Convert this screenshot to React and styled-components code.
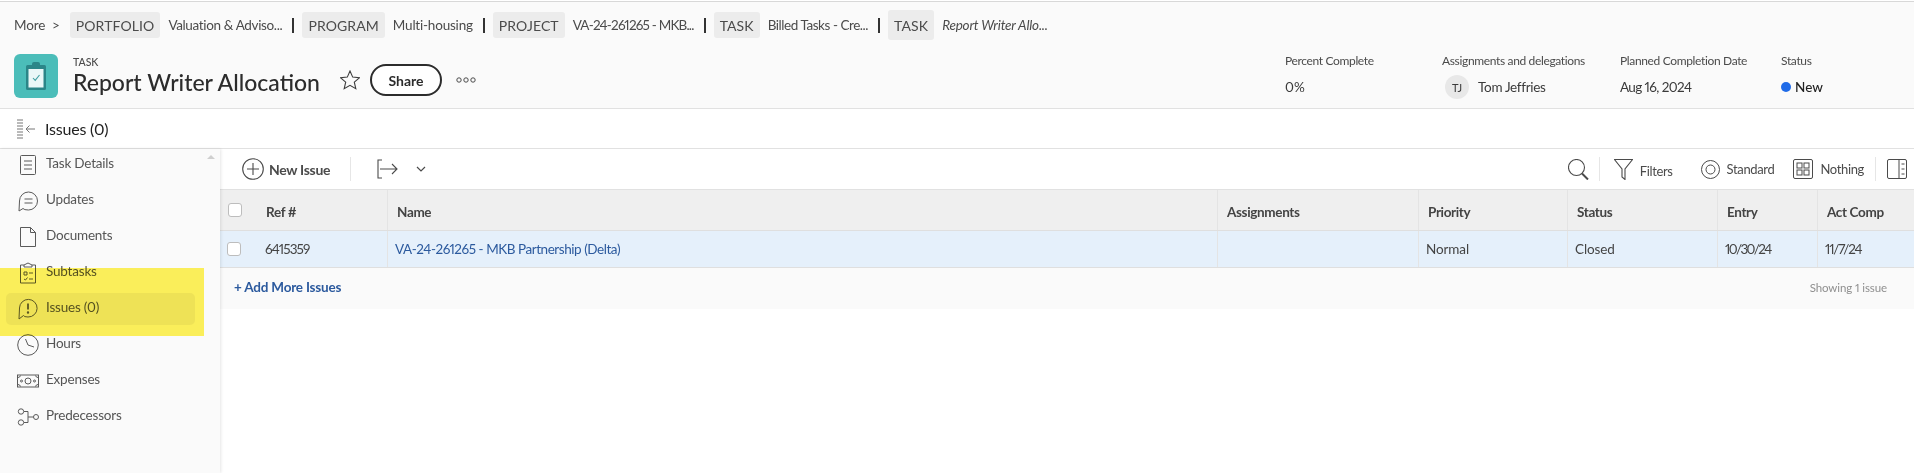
import React from 'react';
import styled, { createGlobalStyle } from 'styled-components';

const GlobalStyle = createGlobalStyle`
    html, body {
        margin: 0;
        padding: 0;
        background: #fff;
    }
    body {
        font-family: "Lato", "Open Sans", sans-serif;
        font-variant-numeric: proportional-nums;
        color: #4b4b4b;
        font-size: 14px;
    }
`;

const Page = styled.div`
    position: relative;
    width: 1914px;
    height: 473px;
    overflow: hidden;
    padding-top: 1px;
    box-sizing: border-box;
    display: flex;
    flex-direction: column;
`;

const Header = styled.header`
    height: 108px;
    flex: none;
    box-sizing: border-box;
    background: #fafafa;
    border-top: 1px solid #d8d8d8;
    border-bottom: 1px solid #e1e1e1;
    padding: 10px 0 0 14px;
`;

const Crumbs = styled.nav`
    display: flex;
    align-items: center;
    height: 26px;
`;

const More = styled.span`
    font-size: 13.5px;
    letter-spacing: -0.1px;
    margin-right: 10px;
    white-space: nowrap;
`;

const Chip = styled.span`
    display: flex;
    align-items: center;
    height: ${(p) => (p.$tall ? '30px' : '26px')};
    padding: 0 6px;
    background: #ececec;
    border-radius: 3px;
    font-size: 14px;
    letter-spacing: 0.1px;
    margin-right: 8px;
`;

const CrumbText = styled.span`
    font-size: 13.5px;
    letter-spacing: ${(p) => p.$spacing ?? -0.3}px;
    white-space: nowrap;
    font-style: ${(p) => (p.$italic ? 'italic' : 'normal')};
`;

const Sep = styled.span`
    width: 2px;
    height: 15px;
    background: #333;
    margin: 0 8px 0 10px;
`;

const TitleRow = styled.div`
    display: flex;
    margin-top: 16px;
`;

const TaskBadge = styled.div`
    width: 44px;
    height: 44px;
    border-radius: 6px;
    background: #4bbdb9;
    flex: none;
    display: flex;
    align-items: center;
    justify-content: center;
`;

const TitleBlock = styled.div`
    margin-left: 15px;
    width: 267px;
`;

const TypeLabel = styled.div`
    font-size: 10.5px;
    line-height: 12px;
    margin-top: 2px;
    font-weight: 500;
`;

const Title = styled.h1`
    margin: -1px 0 0;
    font-size: 23px;
    line-height: 30px;
    font-weight: 500;
    color: #2c2c2c;
    white-space: nowrap;
`;

const TitleActions = styled.div`
    display: flex;
    align-items: center;
    height: 32px;
    margin-top: 10px;
`;

const ShareButton = styled.button`
    width: 72px;
    height: 32px;
    margin-left: 10px;
    border: 2px solid #2c2c2c;
    border-radius: 16px;
    background: #fff;
    font: 700 14px "Lato", sans-serif;
    color: #2c2c2c;
    padding: 0;
`;

const MoreDots = styled.svg`
    margin-left: 14px;
`;

const Metas = styled.div`
    display: flex;
    margin-left: auto;
`;

const Meta = styled.div`
    width: ${(p) => p.$width}px;
    box-sizing: border-box;
`;

const MetaLabel = styled.div`
    font-size: 12px;
    line-height: 14px;
    letter-spacing: -0.35px;
    white-space: nowrap;
`;

const MetaValue = styled.div`
    display: flex;
    align-items: center;
    height: 24px;
    margin-top: 7px;
    font-size: 13.5px;
    letter-spacing: ${(p) => p.$spacing ?? 0}px;
    color: #3a3a3a;
    white-space: nowrap;
`;

const Avatar = styled.span`
    width: 24px;
    height: 24px;
    border-radius: 50%;
    background: #e8e8e8;
    font-size: 11px;
    display: flex;
    align-items: center;
    justify-content: center;
    margin: 0 9px 0 3px;
`;

const StatusDot = styled.span`
    width: 10px;
    height: 10px;
    border-radius: 50%;
    background: #1f6be8;
    margin-right: 4px;
`;

const StatusText = styled.span`
    color: #222;
    font-weight: 500;
`;

const SubHeader = styled.div`
    height: 40px;
    flex: none;
    box-sizing: border-box;
    border-bottom: 1px solid #e1e1e1;
    display: flex;
    align-items: center;
    padding-left: 17px;
    font-size: 16px;
    color: #222;
`;

const SubTitle = styled.span`
    margin: 0 0 0 9px;
    letter-spacing: -0.2px;
`;

const Body = styled.div`
    flex: 1;
    display: flex;
    min-height: 0;
`;

const Sidebar = styled.aside`
    position: relative;
    width: 220px;
    flex: none;
    box-sizing: border-box;
    background: #fafafa;
    box-shadow: 1px 0 3px rgba(0, 0, 0, 0.1);
    z-index: 1;
`;

const ScrollArrow = styled.span`
    position: absolute;
    top: 6px;
    right: 5px;
    border-left: 4px solid transparent;
    border-right: 4px solid transparent;
    border-bottom: 4px solid #cfcfcf;
`;

const NavItem = styled.div`
    height: 32px;
    margin: 0 25px 4px 6px;
    border-radius: 5px;
    background: ${(p) => (p.$active ? '#eeeeee' : 'transparent')};
    display: flex;
    align-items: center;
    font-size: 13.5px;
    letter-spacing: -0.2px;
    color: #555;
`;

const NavIcon = styled.span`
    width: 40px;
    flex: none;
    box-sizing: border-box;
    padding-left: 4px;
    display: flex;
    justify-content: center;
`;

const NavText = styled.span`
    margin-top: -4px;
`;

const Highlight = styled.div`
    position: absolute;
    left: 0;
    top: 268px;
    width: 204px;
    height: 68px;
    background: #fff35c;
    mix-blend-mode: multiply;
    z-index: 2;
`;

const Main = styled.main`
    flex: 1;
    min-width: 0;
    display: flex;
    flex-direction: column;
`;

const Toolbar = styled.div`
    height: 40px;
    flex: none;
    display: flex;
    align-items: center;
    padding: 0 7px 0 22px;
`;

const ToolGroup = styled.div`
    display: flex;
    align-items: center;
    margin-left: ${(p) => (p.$right ? 'auto' : '0')};
`;

const ToolLabel = styled.span`
    font-size: ${(p) => (p.$bold ? '14px' : '13px')};
    font-weight: ${(p) => (p.$bold ? 700 : 400)};
    letter-spacing: ${(p) => (p.$bold ? -0.3 : -0.35)}px;
    margin-left: ${(p) => p.$gap ?? 7}px;
    margin-right: ${(p) => p.$after ?? 0}px;
    padding-top: ${(p) => p.$drop ?? 0}px;
    white-space: nowrap;
`;

const ToolDivider = styled.span`
    width: 1px;
    height: 24px;
    background: #e6e6e6;
    margin: 0 ${(p) => p.$after ?? 14}px 0 ${(p) => p.$before ?? 10}px;
`;

const Chevron = styled.svg`
    margin-left: 18px;
`;

const TableRow = styled.div`
    display: grid;
    grid-template-columns: 168px 830px 201px 149px 150px 100px 96px;
    height: ${(p) => p.$height}px;
    box-sizing: border-box;
    background: ${(p) => p.$bg};
    border-top: ${(p) => (p.$head ? '1px solid #e1e1e1' : 'none')};
    border-bottom: 1px solid #dfdfdf;
`;

const Cell = styled.div`
    display: flex;
    align-items: center;
    box-sizing: border-box;
    padding-left: ${(p) => (p.$head ? 9 : 7)}px;
    padding-top: ${(p) => (p.$head ? 3 : 0)}px;
    border-right: 1px solid #e4e4e4;
    font-size: 13.5px;
    font-weight: ${(p) => (p.$head ? 700 : 400)};
    letter-spacing: ${(p) => p.$spacing ?? (p.$head ? -0.35 : -0.1)}px;
    color: #444;
    white-space: nowrap;
    &:last-child {
        border-right: none;
    }
`;

const CheckCell = styled(Cell)`
    padding-left: ${(p) => (p.$head ? 8 : 7)}px;
`;

const Checkbox = styled.span`
    width: 12px;
    height: 12px;
    flex: none;
    border: 1px solid #bdbdbd;
    border-radius: 3px;
    background: #fff;
    margin-right: 24px;
    margin-top: ${(p) => (p.$head ? -3 : 0)}px;
`;

const RowLink = styled.a`
    color: #2c5a9e;
`;

const TableFooter = styled.div`
    height: 41px;
    flex: none;
    box-sizing: border-box;
    background: #fafafa;
    display: flex;
    align-items: center;
    justify-content: space-between;
    padding: 0 27px 3px 14px;
`;

const AddMore = styled.a`
    color: #2c5a9e;
    font-size: 13.5px;
    font-weight: 700;
    letter-spacing: -0.2px;
`;

const ShowingCount = styled.span`
    color: #8f8f8f;
    font-size: 11.5px;
    letter-spacing: -0.1px;
`;

const Line = styled.svg`
    display: block;
    flex: none;
    fill: none;
    stroke: #5a5a5a;
    stroke-width: 1;
`;

const Icon = ({ w, h, children }) => (
    <Line width={w} height={h} viewBox={`0 0 ${w} ${h}`}>
        {children}
    </Line>
);

const navItems = [
    {
        label: 'Task Details',
        icon: (
            <Icon w={18} h={20}>
                <rect x="1.5" y="0.5" width="15" height="19" rx="1" />
                <path d="M5 6h8M5 10h8M5 14h8" />
            </Icon>
        ),
    },
    {
        label: 'Updates',
        icon: (
            <Icon w={22} h={22}>
                <path d="M2 21 L2.5 11 A9 9 0 1 1 11.5 20 Q7 20 6 18.5 Z" />
                <path d="M7.5 9h8M7.5 13h8" />
            </Icon>
        ),
    },
    {
        label: 'Documents',
        icon: (
            <Icon w={18} h={20}>
                <path d="M1.5 0.5h10l5 5v14h-15z" />
                <path d="M11.5 0.5v5h5" />
            </Icon>
        ),
    },
    {
        label: 'Subtasks',
        icon: (
            <Icon w={18} h={22}>
                <path d="M5 3h-3.5v18h15v-18h-3.5" />
                <path d="M5 5v-2l2-1q2-2 4 0l2 1v2z" />
                <path d="M5 10h3v3h-3zM10 11h4M5 17l1.5 1 2-2.5M10 17h4" />
            </Icon>
        ),
    },
    {
        label: 'Issues (0)',
        active: true,
        icon: (
            <Icon w={20} h={22}>
                <path d="M1 21 L1.5 10 A8.8 8.8 0 1 1 10 19 Q6 19 5.5 17.5 Z" />
                <path d="M10 5.5v6" strokeWidth="1.8" />
                <circle cx="10" cy="14.5" r="0.6" strokeWidth="1.2" />
            </Icon>
        ),
    },
    {
        label: 'Hours',
        icon: (
            <Icon w={22} h={22}>
                <circle cx="11" cy="11" r="10.3" />
                <path d="M8.5 5l2.5 6 6 2" />
            </Icon>
        ),
    },
    {
        label: 'Expenses',
        icon: (
            <Icon w={22} h={14}>
                <rect x="0.5" y="1" width="21" height="12" />
                <circle cx="11" cy="7" r="3" />
                <circle cx="4.5" cy="7" r="1" />
                <circle cx="17.5" cy="7" r="1" />
                <path d="M1 3.5q2 0 2.5-2M21 3.5q-2 0-2.5-2M1 10.5q2 0 2.5 2M21 10.5q-2 0-2.5 2" />
            </Icon>
        ),
    },
    {
        label: 'Predecessors',
        icon: (
            <Icon w={22} h={18}>
                <circle cx="4" cy="3.5" r="2.7" />
                <circle cx="4" cy="14.5" r="2.7" />
                <circle cx="19" cy="9" r="2.5" />
                <path d="M7 3.5h4v11h-4M11 9h5.5" />
            </Icon>
        ),
    },
];

const App = () => {
    return (
        <Page>
            <GlobalStyle />
            <Header>
                <Crumbs>
                    <More>More &nbsp;&gt;</More>
                    <Chip>PORTFOLIO</Chip>
                    <CrumbText $spacing={-0.35}>Valuation &amp; Adviso...</CrumbText>
                    <Sep />
                    <Chip>PROGRAM</Chip>
                    <CrumbText $spacing={-0.2}>Multi-housing</CrumbText>
                    <Sep />
                    <Chip>PROJECT</Chip>
                    <CrumbText $spacing={-0.8}>VA-24-261265 - MKB...</CrumbText>
                    <Sep />
                    <Chip>TASK</Chip>
                    <CrumbText $spacing={-0.45}>Billed Tasks - Cre...</CrumbText>
                    <Sep />
                    <Chip $tall>TASK</Chip>
                    <CrumbText $italic $spacing={-0.2}>Report Writer Allo...</CrumbText>
                </Crumbs>
                <TitleRow>
                    <TaskBadge>
                        <svg width="20" height="28" viewBox="0 0 20 28">
                            <rect x="0" y="3" width="20" height="25" rx="1.5" fill="#2b8688" />
                            <rect x="6" y="0" width="8" height="6" rx="2" fill="#2b8688" />
                            <rect x="2.5" y="7" width="15" height="18.5" fill="#eaf7f7" />
                            <path d="M7 16l2.2 2.4L13.5 13" fill="none" stroke="#3f9fa1" strokeWidth="1.1" />
                        </svg>
                    </TaskBadge>
                    <TitleBlock>
                        <TypeLabel>TASK</TypeLabel>
                        <Title>Report Writer Allocation</Title>
                    </TitleBlock>
                    <TitleActions>
                        <svg width="20" height="20" viewBox="0 0 20 20" fill="none" stroke="#3c3c3c" strokeWidth="1.1">
                            <path d="M10 1l2.7 6.1 6.6.7-5 4.4 1.5 6.5L10 15.3l-5.8 3.4 1.5-6.5-5-4.4 6.6-.7z" />
                        </svg>
                        <ShareButton>Share</ShareButton>
                        <MoreDots width="20" height="6" viewBox="0 0 20 6" fill="none" stroke="#4b4b4b" strokeWidth="1">
                            <circle cx="3" cy="3" r="2.2" />
                            <circle cx="10" cy="3" r="2.2" />
                            <circle cx="17" cy="3" r="2.2" />
                        </MoreDots>
                    </TitleActions>
                    <Metas>
                        <Meta $width={157}>
                            <MetaLabel>Percent Complete</MetaLabel>
                            <MetaValue>0%</MetaValue>
                        </Meta>
                        <Meta $width={178}>
                            <MetaLabel>Assignments and delegations</MetaLabel>
                            <MetaValue $spacing={-0.3}>
                                <Avatar>TJ</Avatar>
                                Tom Jeffries
                            </MetaValue>
                        </Meta>
                        <Meta $width={161}>
                            <MetaLabel>Planned Completion Date</MetaLabel>
                            <MetaValue $spacing={-0.6}>Aug 16, 2024</MetaValue>
                        </Meta>
                        <Meta $width={133}>
                            <MetaLabel>Status</MetaLabel>
                            <MetaValue>
                                <StatusDot />
                                <StatusText>New</StatusText>
                            </MetaValue>
                        </Meta>
                    </Metas>
                </TitleRow>
            </Header>

            <SubHeader>
                <svg width="19" height="20" viewBox="0 0 19 20" fill="none" stroke="#777" strokeWidth="1">
                    <path d="M0 1h6M0 4h6M0 7h6M0 10h6M0 13h6M0 16h6M0 19h6" />
                    <path d="M18 10H9M12.5 6.5L9 10l3.5 3.5" />
                </svg>
                <SubTitle>Issues (0)</SubTitle>
            </SubHeader>

            <Body>
                <Sidebar>
                    <ScrollArrow />
                    {navItems.map((item) => (
                        <NavItem key={item.label} $active={item.active}>
                            <NavIcon>{item.icon}</NavIcon>
                            <NavText>{item.label}</NavText>
                        </NavItem>
                    ))}
                </Sidebar>
                <Main>
                    <Toolbar>
                        <ToolGroup>
                            <svg width="22" height="22" viewBox="0 0 22 22" fill="none" stroke="#4b4b4b" strokeWidth="1.1">
                                <circle cx="11" cy="11" r="10.3" />
                                <path d="M11 5v12M5 11h12" />
                            </svg>
                            <ToolLabel $bold $gap={5}>New Issue</ToolLabel>
                            <ToolDivider $before={20} $after={26} />
                            <svg width="21" height="20" viewBox="0 0 21 20" fill="none" stroke="#4b4b4b" strokeWidth="1.1">
                                <path d="M5 1H1v18h4M3 10h17M15 5l5 5-5 5" />
                            </svg>
                            <Chevron width="10" height="6" viewBox="0 0 10 6" fill="none" stroke="#4b4b4b" strokeWidth="1.2">
                                <path d="M1 1l4 4 4-4" />
                            </Chevron>
                        </ToolGroup>
                        <ToolGroup $right>
                            <svg width="21" height="21" viewBox="0 0 21 21" fill="none" stroke="#4b4b4b" strokeWidth="1.1">
                                <circle cx="8.5" cy="8.5" r="8" />
                                <path d="M14 14.5l6 6" strokeWidth="2" />
                            </svg>
                            <ToolDivider $before={10} $after={14} />
                            <svg width="19" height="21" viewBox="0 0 19 21" fill="none" stroke="#4b4b4b" strokeWidth="1.1">
                                <path d="M0.5 0.5h18l-7.5 9.5v10.5l-3-2.5v-8z" />
                            </svg>
                            <ToolLabel $gap={7} $after={28} $drop={3}>Filters</ToolLabel>
                            <svg width="19" height="19" viewBox="0 0 19 19" fill="none" stroke="#4b4b4b" strokeWidth="1">
                                <circle cx="9.5" cy="9.5" r="9" />
                                <circle cx="9.5" cy="9.5" r="4.5" />
                            </svg>
                            <ToolLabel $gap={7} $after={19}>Standard</ToolLabel>
                            <svg width="20" height="20" viewBox="0 0 20 20" fill="none" stroke="#4b4b4b" strokeWidth="1">
                                <rect x="0.5" y="0.5" width="19" height="19" rx="1.5" />
                                <rect x="4" y="4" width="5" height="5" />
                                <rect x="11" y="4" width="5" height="5" />
                                <rect x="4" y="11" width="5" height="5" />
                                <rect x="11" y="11" width="5" height="5" />
                            </svg>
                            <ToolLabel $gap={7}>Nothing</ToolLabel>
                            <ToolDivider $before={11} $after={11} />
                            <svg width="20" height="20" viewBox="0 0 20 20" fill="none" stroke="#4b4b4b" strokeWidth="1">
                                <rect x="0.5" y="0.5" width="19" height="19" rx="1.5" />
                                <path d="M12 0.5v19M14.5 5h3M14.5 10h3M14.5 15h3" />
                            </svg>
                        </ToolGroup>
                    </Toolbar>

                    <TableRow $head $height={42} $bg="#efefef">
                        <CheckCell $head>
                            <Checkbox $head />
                            Ref #
                        </CheckCell>
                        <Cell $head>Name</Cell>
                        <Cell $head>Assignments</Cell>
                        <Cell $head>Priority</Cell>
                        <Cell $head>Status</Cell>
                        <Cell $head>Entry</Cell>
                        <Cell $head>Act Comp</Cell>
                    </TableRow>
                    <TableRow $height={37} $bg="#e5f0fb">
                        <CheckCell $spacing={-0.9}>
                            <Checkbox />
                            6415359
                        </CheckCell>
                        <Cell $spacing={-0.45}>
                            <RowLink>VA-24-261265 - MKB Partnership (Delta)</RowLink>
                        </Cell>
                        <Cell />
                        <Cell>Normal</Cell>
                        <Cell>Closed</Cell>
                        <Cell $spacing={-1.6}>10/30/24</Cell>
                        <Cell $spacing={-1.2}>11/7/24</Cell>
                    </TableRow>
                    <TableFooter>
                        <AddMore>+ Add More Issues</AddMore>
                        <ShowingCount>Showing 1 issue</ShowingCount>
                    </TableFooter>
                </Main>
            </Body>
            <Highlight />
        </Page>
    );
};

export default App;
